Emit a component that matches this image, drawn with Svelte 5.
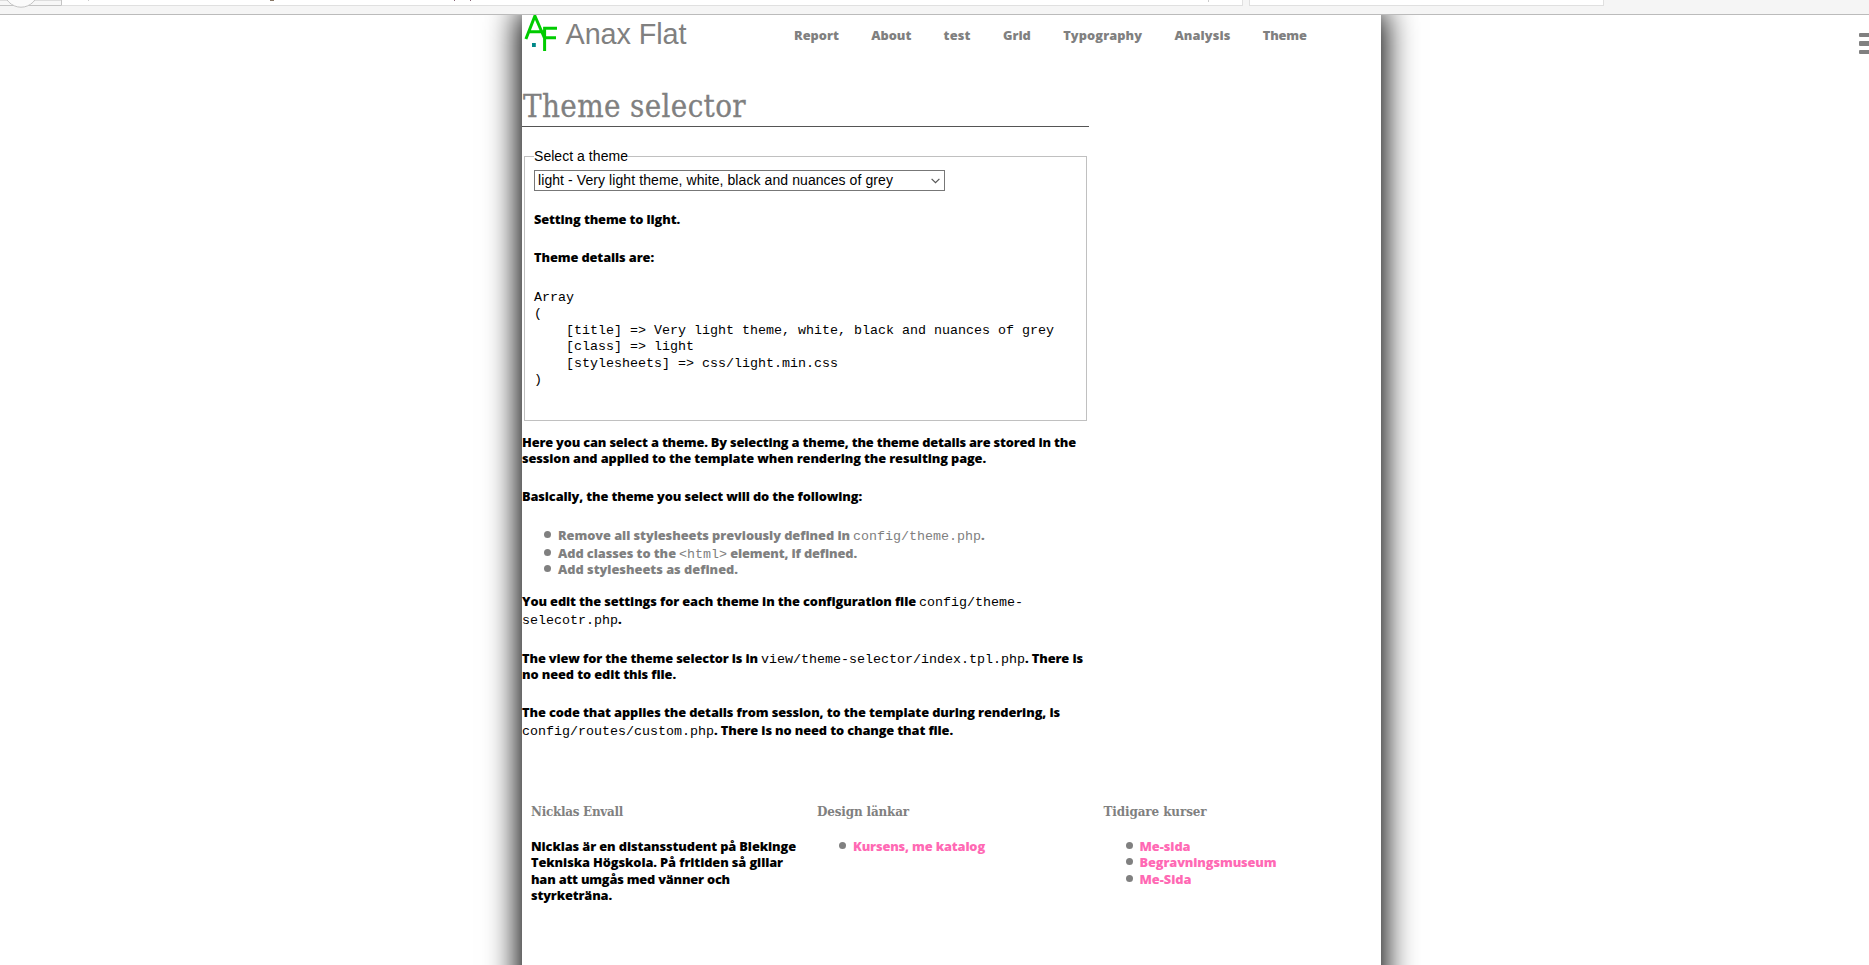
<script>
  // Spreads a line of text to a set width by adjusting its letter spacing.
  function fit(node, width) {
    node.style.letterSpacing = '0px';
    const natural = node.getBoundingClientRect().width;
    const count = Math.max(1, node.textContent.length);
    node.style.letterSpacing = ((width - natural) / count).toFixed(3) + 'px';
  }

  const nav = [
    ['Report', 45], ['About', 40], ['test', 27], ['Grid', 28],
    ['Typography', 79], ['Analysis', 56], ['Theme', 44]
  ];

  const dump = `Array
(
    [title] => Very light theme, white, black and nuances of grey
    [class] => light
    [stylesheets] => css/light.min.css
)`;

  const intro = [
    [['Here you can select a theme. By selecting a theme, the theme details are stored in the', 554]],
    [['session and applied to the template when rendering the resulting page.', 464]]
  ];
  const rules = [
    [['Remove all stylesheets previously defined in', 292], ['config/theme.php'], ['.', 4, 1]],
    [['Add classes to the', 118], ['<html>'], [' element, if defined.', 130, 2]],
    [['Add stylesheets as defined.', 180]]
  ];
  const notes = [
    [
      [['You edit the settings for each theme in the configuration file', 394], ['config/theme-']],
      [['selecotr.php'], ['.', 4, 1]]
    ],
    [
      [['The view for the theme selector is in', 236], ['view/theme-selector/index.tpl.php'], ['. There is', 58, 1]],
      [['no need to edit this file.', 154]]
    ],
    [
      [['The code that applies the details from session, to the template during rendering, is', 538]],
      [['config/routes/custom.php'], ['. There is no need to change that file.', 239, 1]]
    ]
  ];
  const about = [
    ['Nicklas är en distansstudent på Blekinge', 265],
    ['Tekniska Högskola. På fritiden så gillar', 252],
    ['han att umgås med vänner och', 199],
    ['styrketräna.', 81]
  ];
  const courses = [['Me-sida', 51], ['Begravningsmuseum', 137], ['Me-Sida', 52]];
</script>

{#snippet line(parts)}
  <div class="line">
    {#each parts as [text, width, mode]}
      {#if width}
        <span class="seg" class:lead={!mode} use:fit={width}>{text}</span>
      {:else}
        <code>{text}</code>
      {/if}
    {/each}
  </div>
{/snippet}

<div class="window">
  <div class="chrome">
    <div class="backbox"><svg width="62" height="9" viewBox="0 0 62 9"><path d="M0 0H61.5V5.5H0" fill="#f7f7f7" stroke="#c4c4c4" /><circle cx="21" cy="-9.8" r="17" fill="#fbfbfb" stroke="#c4c4c4" /></svg></div>
    <div class="url"><i class="t1"></i><i class="t2"></i><i class="t3"></i><i class="t4"></i><i class="t5"></i></div>
    <div class="search"></div>
  </div>

  <div class="viewport">
    <div class="page">
      <header>
        <svg class="logo" width="36" height="37" viewBox="0 0 36 37">
          <path d="M3.9 24L12.9 1L22.5 23M7 16.8H22" fill="none" stroke="#0c0" stroke-width="3" />
          <path d="M22.6 36V13.2H35M22.4 22.8H34" fill="none" stroke="#0c0" stroke-width="3" />
          <rect x="10" y="28" width="3.8" height="4" fill="#088" />
        </svg>
        <span class="brand"><span class="seg" use:fit={121}>Anax Flat</span></span>
        <nav>
          {#each nav as [label, width]}
            <a><span class="seg" use:fit={width}>{label}</span></a>
          {/each}
        </nav>
      </header>

      <main>
        <h1><span class="seg" use:fit={223}>Theme selector</span></h1>
        <div class="fieldset">
          <div class="legend"><span class="seg" use:fit={94}>Select a theme</span></div>
          <div class="select">
            <span class="seg" use:fit={355}>light - Very light theme, white, black and nuances of grey</span>
            <svg width="9" height="6" viewBox="0 0 9 6"><path d="M.6 .8L4.5 4.7L8.4 .8" fill="none" stroke="#555" stroke-width="1.2" /></svg>
          </div>
          <div class="set">{@render line([['Setting theme to light.', 146]])}</div>
          <div class="det">{@render line([['Theme details are:', 120]])}</div>
          <pre>{dump}</pre>
        </div>

        <div class="intro">{#each intro as l}{@render line(l)}{/each}</div>
        <div class="para">{@render line([['Basically, the theme you select will do the following:', 340]])}</div>
        <ul class="rules">
          {#each rules as l}<li>{@render line(l)}</li>{/each}
        </ul>
        {#each notes as note}
          <div class="note">{#each note as l}{@render line(l)}{/each}</div>
        {/each}
      </main>

      <footer>
        <section>
          <h4><span class="seg" use:fit={92}>Nicklas Envall</span></h4>
          {#each about as l}{@render line([l])}{/each}
        </section>
        <section>
          <h4><span class="seg" use:fit={92}>Design länkar</span></h4>
          <ul class="links"><li>{@render line([['Kursens, me katalog', 132]])}</li></ul>
        </section>
        <section>
          <h4><span class="seg" use:fit={103}>Tidigare kurser</span></h4>
          <ul class="links">{#each courses as l}<li>{@render line([l])}</li>{/each}</ul>
        </section>
      </footer>
    </div>
    <div class="menu"><i></i><i></i><i></i></div>
  </div>
</div>

<style>
  :global(body) { margin: 0; background: #fff; overflow: hidden; }
  .window { width: 1869px; height: 965px; overflow: hidden; display: flex; flex-direction: column; font: 800 12.8px/16px "Open Sans", sans-serif; color: #000; }
  .window * { box-sizing: border-box; }
  .chrome { height: 15px; flex: none; background: #f5f5f5; border-bottom: 1px solid #bbb; display: flex; align-items: flex-start; }
  .backbox { width: 62px; height: 9px; }
  .backbox svg { display: block; }
  .url { width: 1181px; height: 6px; background: #fff; border: solid #e0e0e0; border-width: 0 1px 1px 0; display: flex; }
  .url i { height: 1px; width: 1px; background: #999; }
  .url .t1 { margin-left: 26px; background: #ccc; }
  .url .t2 { width: 4px; margin-left: 181px; background: #876; }
  .url .t3 { margin-left: 180px; background: #867; }
  .url .t4 { margin-left: 15px; background: #867; }
  .url .t5 { margin-left: 737px; background: #ccc; height: 2px; }
  .search { width: 355px; height: 6px; margin-left: 6px; background: #fff; border: 1px solid #e0e0e0; border-top: 0; }
  .viewport { flex: 1; position: relative; overflow: hidden; }
  .page { width: 859px; height: 1100px; margin-left: 522px; background: #fff; box-shadow: 0 0 30px 4px #000; }
  .seg { display: inline-block; white-space: pre; }
  header { display: flex; height: 56px; align-items: flex-start; color: #808080; }
  .logo { display: block; flex: none; }
  .brand { margin-left: 7.5px; width: 228.5px; font: 28.8px/34px "Liberation Sans", Arial, sans-serif; padding-top: 2px; }
  nav { display: flex; gap: 32.3px; padding-top: 12px; }
  main { width: 567px; }
  h1 { margin: 0; height: 56px; border-bottom: 1px solid #555; color: #808080; font: 400 31px/36px "DejaVu Serif Condensed", "DejaVu Serif", serif; font-stretch: condensed; padding: 17px 0 0 1px; -webkit-text-stroke: .3px #808080; }
  .fieldset { margin: 29px 2px 0; height: 265px; border: 1px solid #c0c0c0; padding-left: 9px; }
  .legend { width: 94px; height: 16px; margin-top: -9px; background: #fff; font: 14px/16px "Liberation Sans", Arial, sans-serif; }
  .select { width: 411px; height: 21px; margin-top: 6px; border: 1px solid #777; display: flex; align-items: center; justify-content: space-between; padding: 0 4px 0 3px; font: 14px/19px "Liberation Sans", Arial, sans-serif; }
  .set { margin-top: 19px; }
  .det { margin-top: 22px; }
  pre { margin: 26px 0 0; font: 13.333px/16.4px "Liberation Mono", "Courier New", monospace; }
  .line { height: 16px; line-height: 18px; display: flex; align-items: baseline; white-space: pre; }
  .lead { margin-right: 3px; }
  code { font: 13.333px/18px "Liberation Mono", "Courier New", monospace; }
  .intro { margin-top: 12px; }
  .para { margin-top: 22px; }
  ul { list-style: none; margin: 0; padding: 0; color: #808080; }
  li { display: flex; align-items: flex-start; }
  li::before { content: ""; width: 7px; height: 7px; border-radius: 50%; background: #808080; margin: 5px 7px 0 0; flex: none; }
  .rules { margin-top: 23px; padding-left: 22px; }
  .rules li:nth-child(2) { margin-top: 2px; }
  .note { margin-top: 22px; }
  .rules + .note { margin-top: 16px; }
  .note .line + .line { margin-top: 2px; }
  .note:nth-last-child(2) { margin-top: 23px; }
  .note:nth-last-child(2) .line + .line { margin-top: 0; }
  footer { display: grid; grid-template-columns: 286px 286.5px 1fr; margin-top: 66px; padding-left: 9px; }
  h4 { margin: 0 0 17px; height: 17px; color: #808080; font: 700 13.3px/17px "DejaVu Serif Condensed", "DejaVu Serif", serif; font-stretch: condensed; }
  footer .line { height: 16.4px; }
  .links { padding-left: 22px; }
  .links .line { color: #ff69b4; }
  .menu { position: absolute; left: 1859px; top: 18px; width: 20px; display: flex; flex-direction: column; gap: 4px; }
  .menu i { height: 4.4px; background: #808080; border-radius: 1px; }
</style>
